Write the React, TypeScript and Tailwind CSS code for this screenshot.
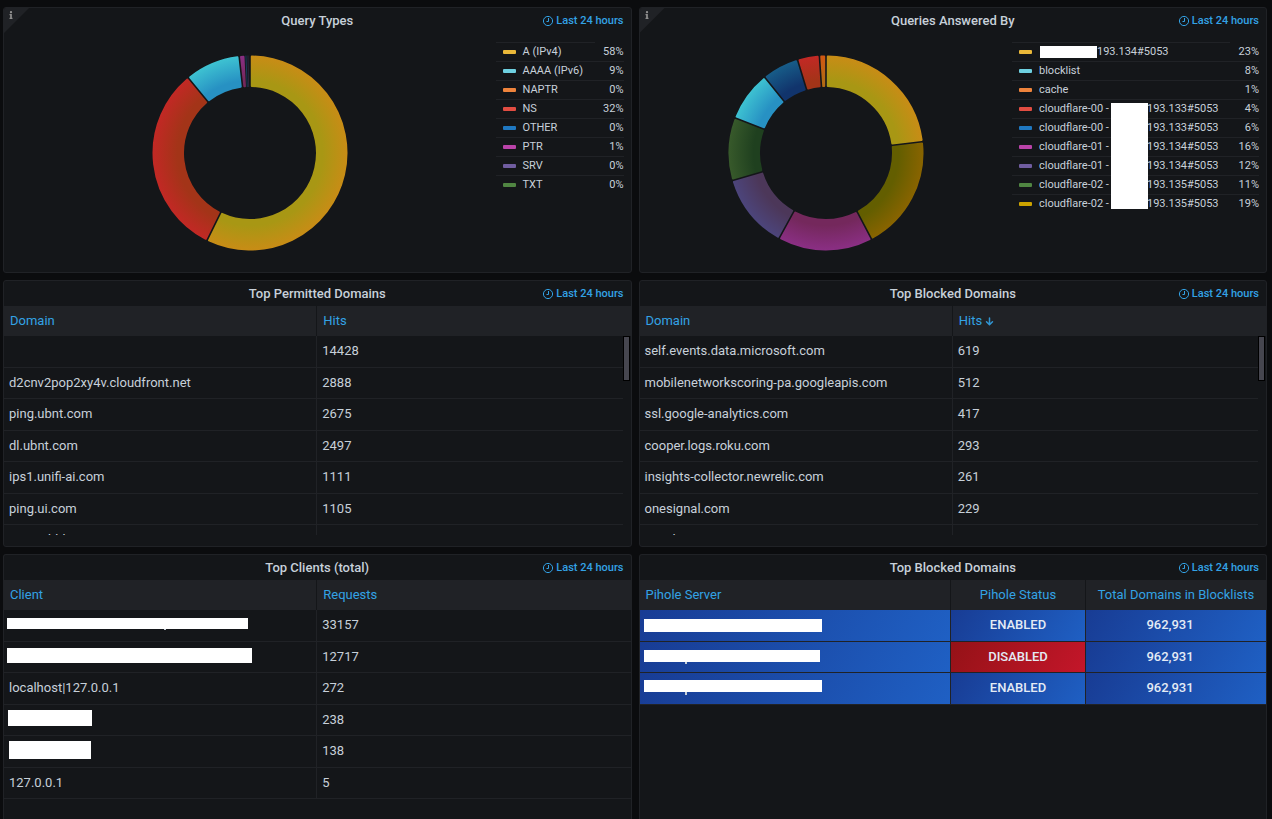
import type { ReactNode } from "react";
import { FaInfo } from "react-icons/fa";

type Slice = { from: number; to: number; paint: string };

const PAINTS: Record<string, [string, string]> = {
  yellow: ["#a89714", "#c98c16"],
  red: ["#a33418", "#c32825"],
  cyan: ["#2791c3", "#3ec3d2"],
  magenta: ["#74285c", "#8b2f85"],
  navy: ["#11346c", "#175d89"],
  orange: ["#b36a14", "#d35712"],
  olive: ["#635e00", "#8a6400"],
  violet: ["#4c3759", "#4c457c"],
  green: ["#1f401f", "#385a2b"],
};

const C = 98;

function point(radius: number, angle: number) {
  return `${(C + radius * Math.sin(angle)).toFixed(2)} ${(C - radius * Math.cos(angle)).toFixed(2)}`;
}

function slicePath({ from, to }: Slice) {
  const rad = Math.PI / 180;
  const outer = 96.5;
  const inner = 67;
  const inset = 1.8;
  const a = from * rad;
  const b = to * rad;
  const o = Math.asin(inset / outer);
  const i = Math.asin(inset / inner);
  const large = b - a > Math.PI ? 1 : 0;
  return `M${point(outer, a + o)}A${outer} ${outer} 0 ${large} 1 ${point(outer, b - o)}L${point(inner, b - i)}A${inner} ${inner} 0 ${large} 0 ${point(inner, a + i)}Z`;
}

function Donut({ id, label, slices, hairlines = [] }: { id: string; label: string; slices: Slice[]; hairlines?: { angle: number; color: string; width: number }[] }) {
  return (
    <svg width="196" height="196" viewBox="0 0 196 196" role="img" aria-label={label}>
      <defs>
        {Object.entries(PAINTS).map(([name, [inner, outer]]) => (
          <radialGradient key={name} id={`${id}-${name}`} gradientUnits="userSpaceOnUse" cx={C} cy={C} r={C}>
            <stop offset="0.74" stopColor={inner} />
            <stop offset="1" stopColor={outer} />
          </radialGradient>
        ))}
      </defs>
      {slices.map((s) => (
        <path key={s.from} d={slicePath(s)} fill={`url(#${id}-${s.paint})`} stroke={`url(#${id}-${s.paint})`} strokeWidth="2" strokeLinejoin="round" />
      ))}
      {hairlines.map((h) => (
        <path key={h.angle} d={`M${point(97.5, (h.angle * Math.PI) / 180)}L${point(66, (h.angle * Math.PI) / 180)}`} stroke={h.color} strokeWidth={h.width} />
      ))}
    </svg>
  );
}

function Clock() {
  return (
    <svg width="12" height="12" viewBox="0 0 12 12" fill="none" stroke="currentColor" aria-hidden="true">
      <circle cx="6" cy="6" r="4.6" strokeWidth="1" />
      <path d="M6.5 3v3.5H4.5" strokeWidth="1" />
    </svg>
  );
}

function Panel({ title, info = false, last = false, children }: { title: string; info?: boolean; last?: boolean; children: ReactNode }) {
  return (
    <section className={`relative flex min-w-0 flex-col overflow-hidden border border-[#202226] bg-[#141619] ${last ? "rounded-t-[3px] border-b-0" : "rounded-[3px]"}`}>
      {info && (
        <button type="button" aria-label="Panel description" className="absolute left-0 top-0 h-[25px] w-[25px] bg-[#202226] text-[#8e8e8e] [clip-path:polygon(0_0,100%_0,0_100%)]">
          <FaInfo size={8} className="absolute left-[3px] top-[3px]" />
        </button>
      )}
      <header className="grid h-[25px] shrink-0 grid-cols-[1fr_auto_1fr] items-center pr-[7px]">
        <h2 className="col-start-2 pl-[7px] text-[13px] font-medium leading-4">{title}</h2>
        <span className="flex items-center justify-end gap-[2px] text-[11px] font-medium leading-4 text-[#33a2e5]">
          <Clock />
          Last 24 hours
        </span>
      </header>
      {children}
    </section>
  );
}

type LegendRow = { color: string; name: ReactNode; value: string };

function Legend({ rows, className, children }: { rows: LegendRow[]; className: string; children?: ReactNode }) {
  return (
    <div className={`relative mr-[7px] mt-[9px] shrink-0 self-start ${className}`}>
      <table className="w-full border-separate border-spacing-0 text-[11px] leading-[18px]">
        <tbody>
          {rows.map((r, i) => (
            <tr key={i} className="h-[19px]">
              <td className="border-t border-[#202226] p-0">
                <div className="flex items-center whitespace-pre pl-[7px]">
                  <span className={`mr-[7px] h-1 w-[13px] rounded-[1px] ${r.color}`} />
                  {r.name}
                </div>
              </td>
              <td className={`w-[29px] p-0 text-right ${i === 0 ? "" : "border-t border-[#202226]"}`}>{r.value}</td>
            </tr>
          ))}
        </tbody>
      </table>
      {children}
    </div>
  );
}

const queryTypes: LegendRow[] = [
  { color: "bg-[#eab839]", name: "A (IPv4)", value: "58%" },
  { color: "bg-[#6ed0e0]", name: "AAAA (IPv6)", value: "9%" },
  { color: "bg-[#ef843c]", name: "NAPTR", value: "0%" },
  { color: "bg-[#e24d42]", name: "NS", value: "32%" },
  { color: "bg-[#1f78c1]", name: "OTHER", value: "0%" },
  { color: "bg-[#ba43a9]", name: "PTR", value: "1%" },
  { color: "bg-[#705da0]", name: "SRV", value: "0%" },
  { color: "bg-[#508642]", name: "TXT", value: "0%" },
];

function Upstream({ name, address }: { name: string; address: string }) {
  return (
    <>
      <span className="w-[72px]">{name} -</span>
      <span className="w-9" />
      {address}
    </>
  );
}

const answeredBy: LegendRow[] = [
  {
    color: "bg-[#eab839]",
    name: (
      <>
        <span className="ml-px h-3 w-[57px] bg-white" />
        193.134#5053
      </>
    ),
    value: "23%",
  },
  { color: "bg-[#6ed0e0]", name: "blocklist", value: "8%" },
  { color: "bg-[#ef843c]", name: "cache", value: "1%" },
  { color: "bg-[#e24d42]", name: <Upstream name="cloudflare-00" address="193.133#5053" />, value: "4%" },
  { color: "bg-[#1f78c1]", name: <Upstream name="cloudflare-00" address="193.133#5053" />, value: "6%" },
  { color: "bg-[#ba43a9]", name: <Upstream name="cloudflare-01" address="193.134#5053" />, value: "16%" },
  { color: "bg-[#705da0]", name: <Upstream name="cloudflare-01" address="193.134#5053" />, value: "12%" },
  { color: "bg-[#508642]", name: <Upstream name="cloudflare-02" address="193.135#5053" />, value: "11%" },
  { color: "bg-[#cca300]", name: <Upstream name="cloudflare-02" address="193.135#5053" />, value: "19%" },
];

const thClass = "border-r border-[#141619] p-0 px-1.5 font-normal last:border-r-0";
const rowClass = "odd:h-8 even:h-[31px]";

function HeadButton({ children }: { children: ReactNode }) {
  return (
    <button type="button" className="inline-flex items-center gap-[3px] text-[#33a2e5]">
      {children}
    </button>
  );
}

function ArrowDown() {
  return (
    <svg width="9" height="9" viewBox="0 0 9 9" fill="none" stroke="currentColor" strokeWidth="1.5" strokeLinecap="round" strokeLinejoin="round" className="opacity-90" aria-hidden="true">
      <path d="M4.5 1v6.5M1.5 4.7l3 3 3-3" />
    </svg>
  );
}

function PairTable({ heads, rows, sorted = false, scroll = false }: { heads: [string, string]; rows: [ReactNode, string][]; sorted?: boolean; scroll?: boolean }) {
  return (
    <div className={`relative min-h-0 flex-1 overflow-hidden ${scroll ? "mb-[11px]" : ""}`}>
      <table className="w-full table-fixed border-separate border-spacing-0 text-left text-[13px] leading-5">
        <thead className="bg-[#202226]">
          <tr className="h-[30px]">
            <th className={`w-1/2 ${thClass}`}>
              <HeadButton>{heads[0]}</HeadButton>
            </th>
            <th className={thClass}>
              <HeadButton>
                {heads[1]}
                {sorted && <ArrowDown />}
              </HeadButton>
            </th>
          </tr>
        </thead>
        <tbody>
          {rows.map(([name, count], i) => (
            <tr key={i} className={rowClass}>
              <td className="border-b border-r border-[#202226] p-0 pb-px pl-[5px]">{name}</td>
              <td className="border-b border-[#202226] p-0 pb-px pl-[5px]">{count}</td>
            </tr>
          ))}
        </tbody>
      </table>
      {scroll && (
        <div className="absolute bottom-0 right-0 top-[30px] w-2 bg-[#141619] pr-px">
          <div className="h-[45px] border border-black bg-[#46464f]" />
        </div>
      )}
    </div>
  );
}

function Redacted({ className, tail }: { className: string; tail?: string }) {
  return (
    <div className={`relative bg-white ${className}`}>
      {tail && <span className={`absolute top-full w-[2px] bg-[#c7d0d9] ${tail}`} />}
    </div>
  );
}

const permitted: [ReactNode, string][] = [
  ["", "14428"],
  ["d2cnv2pop2xy4v.cloudfront.net", "2888"],
  ["ping.ubnt.com", "2675"],
  ["dl.ubnt.com", "2497"],
  ["ips1.unifi-ai.com", "1111"],
  ["ping.ui.com", "1105"],
  ["www.abhk.com", ""],
];

const blocked: [ReactNode, string][] = [
  ["self.events.data.microsoft.com", "619"],
  ["mobilenetworkscoring-pa.googleapis.com", "512"],
  ["ssl.google-analytics.com", "417"],
  ["cooper.logs.roku.com", "293"],
  ["insights-collector.newrelic.com", "261"],
  ["onesignal.com", "229"],
  ["vungle.com", ""],
];

const clients: [ReactNode, string][] = [
  [<Redacted className="-ml-0.5 -mt-1 h-[11px] w-[241px]" tail="left-[157px] h-px" />, "33157"],
  [<Redacted className="-ml-0.5 -mt-0.5 h-[15px] w-[245px]" />, "12717"],
  ["localhost|127.0.0.1", "272"],
  [<Redacted className="-ml-px -mt-1 h-4 w-[84px]" />, "238"],
  [<Redacted className="-mt-0.5 h-[18px] w-[82px]" />, "138"],
  ["127.0.0.1", "5"],
];

const servers = [
  { bar: <Redacted className="h-[13px] w-[178px]" />, enabled: true },
  { bar: <Redacted className="-mt-0.5 h-3 w-[176px]" tail="left-[41px] h-0.5" />, enabled: false },
  { bar: <Redacted className="-mt-1.5 h-3 w-[178px]" tail="left-[41px] h-[3px]" />, enabled: true },
];

const blueCell = "bg-[linear-gradient(120deg,#183c94,#1f60c4)] bg-origin-border";
const redCell = "bg-[linear-gradient(120deg,#951217,#c4162a)] bg-origin-border";

export default function App() {
  return (
    <main className="flex min-h-screen flex-col gap-[7px] bg-[#0b0c0e] pl-[3px] pr-[5px] pt-[7px] font-['Roboto',sans-serif] text-[#c7d0d9]">
      <div className="grid h-[266px] grid-cols-2 gap-[7px]">
        <Panel title="Query Types" info>
          <div className="flex flex-1">
            <div className="flex flex-1 items-center justify-center">
              <Donut
                id="types"
                label="Query types"
                slices={[
                  { from: 0, to: 206.2, paint: "yellow" },
                  { from: 206.2, to: 320.6, paint: "red" },
                  { from: 320.6, to: 353.6, paint: "cyan" },
                  { from: 353.6, to: 357.2, paint: "magenta" },
                ]}
                hairlines={[
                  { angle: 357.6, color: "#173b58", width: 1 },
                  { angle: 358.8, color: "#2a2740", width: 1 },
                ]}
              />
            </div>
            <Legend rows={queryTypes} className="w-[128px]" />
          </div>
        </Panel>
        <Panel title="Queries Answered By" info>
          <div className="flex flex-1">
            <div className="flex flex-1 items-center justify-center">
              <Donut
                id="answers"
                label="Queries answered by"
                slices={[
                  { from: 0, to: 83.3, paint: "yellow" },
                  { from: 83.3, to: 152.1, paint: "olive" },
                  { from: 152.1, to: 208.8, paint: "magenta" },
                  { from: 208.8, to: 253.6, paint: "violet" },
                  { from: 253.6, to: 291.1, paint: "green" },
                  { from: 291.1, to: 321, paint: "cyan" },
                  { from: 321, to: 343, paint: "navy" },
                  { from: 343, to: 356.1, paint: "red" },
                  { from: 356.1, to: 360, paint: "orange" },
                ]}
              />
            </div>
            <Legend rows={answeredBy} className="w-[247px]">
              <div className="absolute left-[99px] top-[61px] h-[106px] w-[37px] bg-white" />
            </Legend>
          </div>
        </Panel>
      </div>

      <div className="grid h-[267px] grid-cols-2 gap-[7px]">
        <Panel title="Top Permitted Domains">
          <PairTable heads={["Domain", "Hits"]} rows={permitted} scroll />
        </Panel>
        <Panel title="Top Blocked Domains">
          <PairTable heads={["Domain", "Hits"]} rows={blocked} sorted scroll />
        </Panel>
      </div>

      <div className="grid flex-1 grid-cols-2 gap-[7px]">
        <Panel title="Top Clients (total)" last>
          <PairTable heads={["Client", "Requests"]} rows={clients} />
        </Panel>
        <Panel title="Top Blocked Domains" last>
          <table className="w-full table-fixed border-separate border-spacing-0 text-[13px] leading-5">
            <thead className="bg-[#202226]">
              <tr className="h-[30px]">
                <th className={`text-left ${thClass}`}>
                  <HeadButton>Pihole Server</HeadButton>
                </th>
                <th className={`w-[135px] ${thClass}`}>
                  <HeadButton>Pihole Status</HeadButton>
                </th>
                <th className={`w-[180px] ${thClass}`}>
                  <HeadButton>Total Domains in Blocklists</HeadButton>
                </th>
              </tr>
            </thead>
            <tbody className="text-center font-medium text-[#e4ebf5]">
              {servers.map((s, i) => (
                <tr key={i} className={rowClass}>
                  <td className={`border-b border-r border-[#202226] p-0 pl-1 ${blueCell}`}>{s.bar}</td>
                  <td className={`border-b border-r border-[#202226] p-0 pb-px ${s.enabled ? blueCell : redCell}`}>{s.enabled ? "ENABLED" : "DISABLED"}</td>
                  <td className={`border-b border-[#202226] p-0 pb-px pr-3 ${blueCell}`}>962,931</td>
                </tr>
              ))}
            </tbody>
          </table>
        </Panel>
      </div>
    </main>
  );
}
